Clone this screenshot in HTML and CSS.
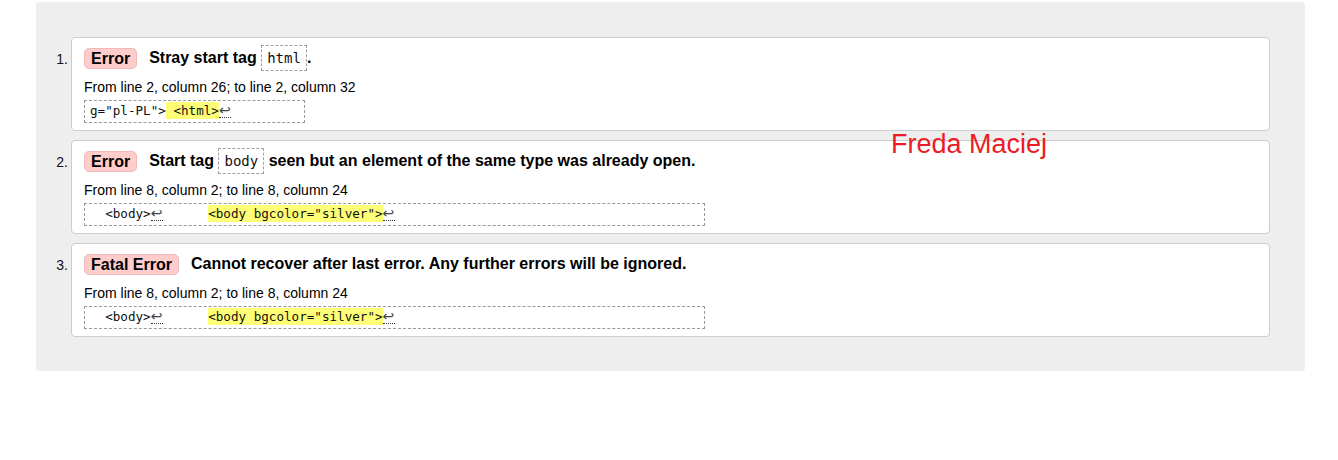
FILE: index.html
```html
<!DOCTYPE html>
<html lang="en">
<head>
<meta charset="utf-8">
<title>Validation results</title>
<link rel="stylesheet" href="styles.css">
</head>
<body>
<div class="page">
  <div class="panel">
    <ol class="messages">
      <li class="msg">
        <div class="card">
          <div class="head">
            <span class="badge">Error</span>
            <span class="text">Stray start tag <code class="tag">html</code>.</span>
          </div>
          <p class="loc">From line 2, column 26; to line 2, column 32</p>
          <code class="extract w1">g="pl-PL"&gt;<mark> &lt;html&gt;</mark><span class="lf">↩</span></code>
        </div>
      </li>
      <li class="msg">
        <div class="card">
          <div class="head">
            <span class="badge">Error</span>
            <span class="text">Start tag <code class="tag">body</code> seen but an element of the same type was already open.</span>
          </div>
          <p class="loc">From line 8, column 2; to line 8, column 24</p>
          <code class="extract w2">  &lt;body&gt;<span class="lf">↩</span>      <mark>&lt;body bgcolor="silver"&gt;</mark><span class="lf">↩</span></code>
        </div>
      </li>
      <li class="msg">
        <div class="card">
          <div class="head">
            <span class="badge">Fatal Error</span>
            <span class="text">Cannot recover after last error. Any further errors will be ignored.</span>
          </div>
          <p class="loc">From line 8, column 2; to line 8, column 24</p>
          <code class="extract w2">  &lt;body&gt;<span class="lf">↩</span>      <mark>&lt;body bgcolor="silver"&gt;</mark><span class="lf">↩</span></code>
        </div>
      </li>
    </ol>
  </div>
  <div class="signature">Freda Maciej</div>
</div>
</body>
</html>
```
FILE: styles.css
```css
html, body {
  margin: 0;
  padding: 0;
  background: #fff;
}

body {
  font-family: "Liberation Sans", Arial, sans-serif;
  color: #000;
}

.page {
  position: relative;
  padding: 2px 33px 0 36px;
  height: 458px;
}

.panel {
  background: #eeeeee;
  border-radius: 3px;
  padding: 35px 35px 34px 0;
}

.messages {
  list-style: none;
  margin: 0;
  padding: 0;
  display: flex;
  flex-direction: column;
  gap: 9px;
  counter-reset: item;
}

.msg {
  display: flex;
  counter-increment: item;
}

.msg::before {
  content: counter(item) ".";
  box-sizing: border-box;
  width: 35px;
  flex: none;
  padding: 14px 3px 0 0;
  text-align: right;
  font-size: 14px;
  line-height: 16px;
  color: #111;
}

.card {
  flex: 1;
  height: 94px;
  box-sizing: border-box;
  background: #fff;
  border: 1px solid #cccccc;
  border-radius: 4px;
  padding: 7px 12px 0 12px;
  display: flex;
  flex-direction: column;
  align-items: flex-start;
}

.head {
  display: flex;
  align-items: center;
  height: 26px;
  flex: none;
}

.badge {
  display: inline-block;
  background: #ffcccc;
  border: 1px solid #f0b8b8;
  border-radius: 5px;
  padding: 0 6px;
  font-size: 16px;
  font-weight: bold;
  line-height: 19px;
}

.text {
  margin-left: 12px;
  font-size: 16px;
  font-weight: bold;
  line-height: 26px;
  white-space: nowrap;
}

.tag {
  display: inline-block;
  vertical-align: top;
  border: 1px dashed #a0a0a0;
  padding: 0 5px;
  font-family: "DejaVu Sans Mono", "Liberation Mono", monospace;
  font-size: 14px;
  font-weight: normal;
  line-height: 24px;
  color: #111;
}

.loc {
  margin: 7px 0 0;
  font-size: 14px;
  line-height: 18px;
}

.extract {
  display: block;
  box-sizing: border-box;
  height: 23px;
  margin-top: 4px;
  border: 1px dashed #999999;
  padding: 1px 5px 0;
  font-family: "DejaVu Sans Mono", "Liberation Mono", monospace;
  font-size: 12.6px;
  line-height: 17px;
  white-space: pre;
  color: #111;
}

.w1 {
  width: 221px;
}

.w2 {
  width: 621px;
}

.extract mark {
  background: #ffff77;
  color: inherit;
  padding: 1px 0;
}

.lf {
  display: inline-block;
  width: 12px;
  line-height: 13px;
  font-family: "DejaVu Sans", sans-serif;
  font-size: 14px;
  color: #444;
  border-bottom: 1px dotted #333;
}

.signature {
  position: absolute;
  left: 891px;
  top: 129px;
  font-family: "Liberation Sans", Arial, sans-serif;
  font-size: 27px;
  line-height: 31px;
  color: #ed1c24;
  white-space: nowrap;
}
```
